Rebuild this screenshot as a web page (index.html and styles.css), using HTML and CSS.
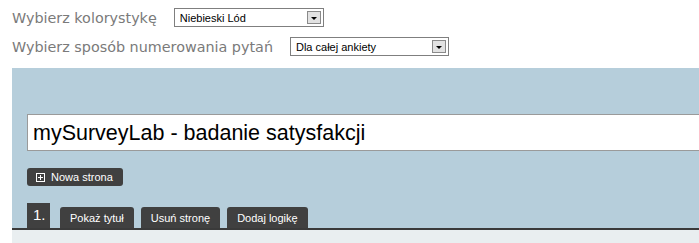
FILE: index.html
```html
<!DOCTYPE html>
<html lang="pl">
<head>
  <meta charset="UTF-8" />
  <title>Edytor ankiety</title>
  <link rel="stylesheet" href="styles.css">
</head>
<body>
  <div class="ustawienia">
    <div class="wiersz">
      <span class="etykieta">Wybierz kolorystykę</span>
      <div class="lista lista-kolor">
        <span>Niebieski Lód</span>
        <span class="strzalka"></span>
      </div>
    </div>
    <div class="wiersz">
      <span class="etykieta">Wybierz sposób numerowania pytań</span>
      <div class="lista lista-numer">
        <span>Dla całej ankiety</span>
        <span class="strzalka"></span>
      </div>
    </div>
  </div>

  <div class="panel">
    <div class="tytul">mySurveyLab - badanie satysfakcji</div>
    <button class="nowa-strona">
      <svg width="9" height="9" viewBox="0 0 9 9">
        <rect x="0.5" y="0.5" width="8" height="8" fill="none" stroke="#fff" stroke-width="1"/>
        <path d="M4.5 2v5M2 4.5h5" stroke="#fff" stroke-width="1"/>
      </svg>
      Nowa strona
    </button>
    <div class="zakladki">
      <span class="numer">1.</span>
      <span class="zakladka">Pokaż tytuł</span>
      <span class="zakladka">Usuń stronę</span>
      <span class="zakladka">Dodaj logikę</span>
    </div>
  </div>
  <div class="strona"></div>
</body>
</html>
```

FILE: styles.css
```css
body {
  margin: 0;
  font-family: "DejaVu Sans", Verdana, sans-serif;
  background: #fff;
  overflow: hidden;
}
.ustawienia {
  padding: 3px 0 0 12px;
  height: 68px;
  box-sizing: border-box;
}
.wiersz {
  display: flex;
  align-items: center;
  height: 29px;
}
.etykieta {
  color: #7a7a7a;
  font-size: 14.35px;
  margin-right: 17px;
}
.lista {
  display: flex;
  align-items: center;
  justify-content: space-between;
  height: 19px;
  box-sizing: border-box;
  border: 1px solid #7f7f7f;
  padding: 0 2px 0 5px;
  font-family: "Liberation Sans", Tahoma, sans-serif;
  font-size: 11px;
  color: #000;
}
.lista-kolor {
  width: 150px;
}
.lista-numer {
  width: 159px;
}
.strzalka {
  width: 14px;
  height: 13px;
  box-sizing: border-box;
  border: 1px solid #8a8a8a;
  background: #e2e2e2;
  position: relative;
}
.strzalka::after {
  content: "";
  position: absolute;
  left: 3px;
  top: 5px;
  border-left: 3px solid transparent;
  border-right: 3px solid transparent;
  border-top: 3px solid #000;
}
.panel {
  margin-left: 12px;
  background: #b6cedb;
  padding: 46px 0 0 15px;
  border-bottom: 2px solid #3a3a3a;
  overflow: hidden;
}
.tytul {
  width: 720px;
  height: 37px;
  box-sizing: border-box;
  background: #fff;
  border: 1px solid #9a9a9a;
  padding: 6px 0 0 5px;
  font-family: "Liberation Sans", Arial, sans-serif;
  font-size: 21.5px;
  color: #000;
}
.nowa-strona {
  display: flex;
  align-items: center;
  gap: 6px;
  margin-top: 17px;
  height: 18px;
  width: 96px;
  padding: 0 0 0 9px;
  border: none;
  border-radius: 3px;
  background: #404040;
  color: #fff;
  font-family: "Liberation Sans", Tahoma, sans-serif;
  font-size: 11px;
}
.zakladki {
  display: flex;
  align-items: flex-end;
  gap: 7px;
  margin-top: 17px;
}
.zakladka,
.numer {
  background: #404040;
  color: #fff;
  font-family: "Liberation Sans", Tahoma, sans-serif;
}
.numer {
  width: 23px;
  height: 25px;
  font-size: 15px;
  padding: 3px 0 0 6px;
  box-sizing: border-box;
  margin-right: 3px;
}
.zakladka {
  height: 21px;
  padding: 5px 10px 0;
  box-sizing: border-box;
  font-size: 11px;
  border-radius: 3px 3px 0 0;
}
.strona {
  background: #e9eef0;
  margin-left: 12px;
  height: 40px;
}
```
